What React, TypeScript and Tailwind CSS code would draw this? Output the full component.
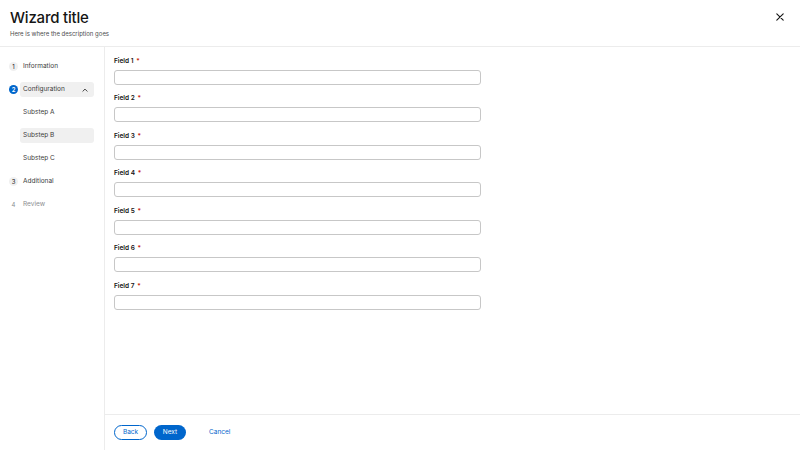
import React from 'react';

const steps = [
  { n: '1', label: 'Information', state: 'done' },
  { n: '2', label: 'Configuration', state: 'current' },
  { n: '3', label: 'Additional', state: 'done' },
  { n: '4', label: 'Review', state: 'disabled' },
];

const subs = ['Substep A', 'Substep B', 'Substep C'];
const fields = ['Field 1', 'Field 2', 'Field 3', 'Field 4', 'Field 5', 'Field 6', 'Field 7'];

const StepNum: React.FC<{ n: string; state: string }> = ({ n, state }) => {
  if (state === 'current') {
    return (
      <span className="w-[9px] h-[9px] rounded-full bg-[#0066cc] text-white text-[6px] font-semibold flex items-center justify-center">
        {n}
      </span>
    );
  }
  if (state === 'disabled') {
    return <span className="w-[9px] h-[9px] text-[#8a8d90] text-[6px] flex items-center justify-center">{n}</span>;
  }
  return (
    <span className="w-[9px] h-[9px] rounded-full bg-[#f0f0f0] text-[#151515] text-[6px] flex items-center justify-center">
      {n}
    </span>
  );
};

export default function App() {
  return (
    <div className="w-[800px] h-[450px] bg-white flex flex-col text-[#151515] overflow-hidden" style={{ fontFamily: 'Inter, "Noto Sans", sans-serif' }}>
      {/* header */}
      <div className="h-[47px] border-b border-[#ececec] flex justify-between px-[10px] pt-[8px] shrink-0">
        <div>
          <h1 className="text-[15px] font-medium leading-[20px] tracking-[-0.2px]">Wizard title</h1>
          <p className="text-[6px] text-[#4d4d4d] mt-[1px]">Here is where the description goes</p>
        </div>
        <button className="w-[12px] h-[12px] mt-[3px] mr-[4px] flex items-center justify-center">
          <svg viewBox="0 0 10 10" className="w-[8px] h-[8px]">
            <path d="M1 1 L9 9 M9 1 L1 9" stroke="#151515" strokeWidth="1.4" strokeLinecap="round" />
          </svg>
        </button>
      </div>

      <div className="flex flex-1 min-h-0">
        {/* nav */}
        <nav className="w-[105px] border-r border-[#ececec] pt-[12px] pl-[9px] pr-[10px] shrink-0 text-[6.5px] text-[#3c3c3c]">
          <ul className="flex flex-col gap-[8px]">
            {steps.map((s) => (
              <React.Fragment key={s.n}>
                <li className="flex items-center gap-[2px] h-[15px]">
                  <StepNum n={s.n} state={s.state} />
                  <div
                    className={
                      'flex-1 h-[15px] rounded-[3px] flex items-center justify-between pl-[3px] pr-[6px] ' +
                      (s.state === 'current' ? 'bg-[#f0f0f0]' : '') +
                      (s.state === 'disabled' ? ' text-[#8a8d90]' : '')
                    }
                  >
                    <span>{s.label}</span>
                    {s.state === 'current' && (
                      <svg viewBox="0 0 10 10" className="w-[6px] h-[6px]">
                        <path d="M1.5 7 L5 3.5 L8.5 7" stroke="#151515" strokeWidth="1.3" fill="none" strokeLinecap="round" strokeLinejoin="round" />
                      </svg>
                    )}
                  </div>
                </li>
                {s.state === 'current' &&
                  subs.map((sub) => (
                    <li key={sub} className="pl-[11px] h-[15px]">
                      <div className={'h-[15px] rounded-[3px] flex items-center pl-[3px] ' + (sub === 'Substep B' ? 'bg-[#f0f0f0]' : '')}>
                        {sub}
                      </div>
                    </li>
                  ))}
              </React.Fragment>
            ))}
          </ul>
        </nav>

        {/* main */}
        <main className="flex-1 flex flex-col min-w-0">
          <div className="flex-1 pl-[9px] pt-[9.5px]">
            <div className="flex flex-col gap-[9.5px] w-[367px]">
              {fields.map((f) => (
                <div key={f}>
                  <label className="block text-[6.5px] font-semibold leading-[9px]">
                    {f} <span className="text-[#c9190b] ml-[1px]">*</span>
                  </label>
                  <input className="mt-[4px] block w-full h-[15px] border border-[#c7c7c7] rounded-[3px] bg-white" />
                </div>
              ))}
            </div>
          </div>
          <div className="h-[36px] border-t border-[#ececec] flex items-center pl-[9px] gap-[7px] shrink-0">
            <button className="w-[33px] h-[15px] rounded-full border border-[#0066cc] text-[#0066cc] text-[6.5px] leading-none flex items-center justify-center">Back</button>
            <button className="w-[32px] h-[15px] rounded-full bg-[#0066cc] text-white text-[6.5px] leading-none flex items-center justify-center">Next</button>
            <button className="ml-[16px] text-[#0066cc] text-[6.5px] leading-none">Cancel</button>
          </div>
        </main>
      </div>
    </div>
  );
}
